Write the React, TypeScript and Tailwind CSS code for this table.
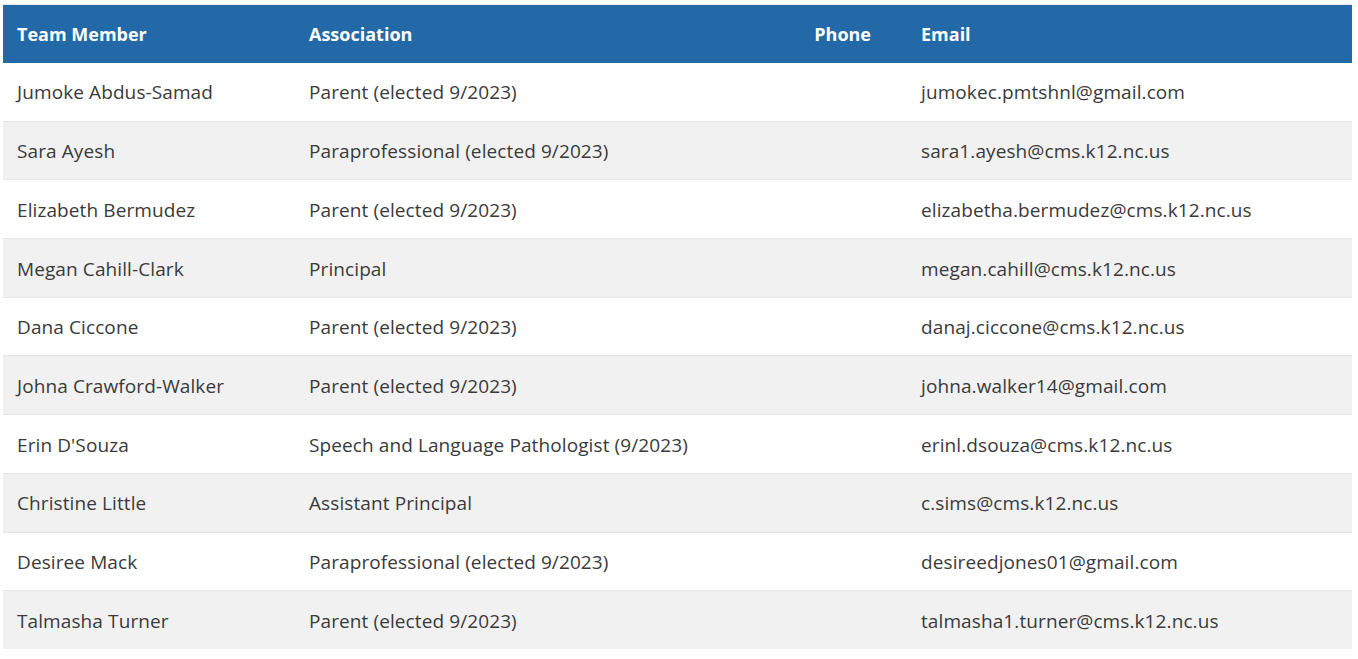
import React from 'react'

const members = [
  { name: 'Jumoke Abdus-Samad', role: 'Parent (elected 9/2023)', email: 'jumokec.pmtshnl@gmail.com' },
  { name: 'Sara Ayesh', role: 'Paraprofessional (elected 9/2023)', email: 'sara1.ayesh@cms.k12.nc.us' },
  { name: 'Elizabeth Bermudez', role: 'Parent (elected 9/2023)', email: 'elizabetha.bermudez@cms.k12.nc.us' },
  { name: 'Megan Cahill-Clark', role: 'Principal', email: 'megan.cahill@cms.k12.nc.us' },
  { name: 'Dana Ciccone', role: 'Parent (elected 9/2023)', email: 'danaj.ciccone@cms.k12.nc.us' },
  { name: 'Johna Crawford-Walker', role: 'Parent (elected 9/2023)', email: 'johna.walker14@gmail.com' },
  { name: "Erin D'Souza", role: 'Speech and Language Pathologist (9/2023)', email: 'erinl.dsouza@cms.k12.nc.us' },
  { name: 'Christine Little', role: 'Assistant Principal', email: 'c.sims@cms.k12.nc.us' },
  { name: 'Desiree Mack', role: 'Paraprofessional (elected 9/2023)', email: 'desireedjones01@gmail.com' },
  { name: 'Talmasha Turner', role: 'Parent (elected 9/2023)', email: 'talmasha1.turner@cms.k12.nc.us' },
]

export default function App() {
  return (
    <div className="min-h-screen bg-white pl-[3px] pr-[6px] pt-[4px] font-['Open_Sans',sans-serif]">
      <table className="w-full table-fixed border-collapse border-t border-[#e8e8e8] text-[19px] text-[#3a3a3a]">
        <colgroup>
          <col className="w-[292px]" />
          <col className="w-[505px]" />
          <col className="w-[107px]" />
          <col />
        </colgroup>
        <thead>
          <tr className="h-[58px] bg-[#2368a7] text-left text-[18px] text-white">
            <th className="px-[14px] pt-[2px] font-bold">Team Member</th>
            <th className="px-[14px] pt-[2px] font-bold">Association</th>
            <th className="pr-[36px] pt-[2px] text-right font-bold">Phone</th>
            <th className="px-[14px] pt-[2px] font-bold">Email</th>
          </tr>
        </thead>
        <tbody>
          {members.map((m, i) => (
            <tr
              key={m.name}
              className={`h-[58.7px] border-b border-[#e6e6e6] last:border-b-0 ${i % 2 ? 'bg-[#f1f1f1]' : 'bg-white'}`}
            >
              <td className="px-[14px] pt-[2px] tracking-[0.1px]">{m.name}</td>
              <td className="px-[14px] pt-[2px] tracking-[0.1px]">{m.role}</td>
              <td className="px-[14px]"></td>
              <td className="px-[14px] pt-[2px] tracking-[0.1px]">{m.email}</td>
            </tr>
          ))}
        </tbody>
      </table>
    </div>
  )
}
